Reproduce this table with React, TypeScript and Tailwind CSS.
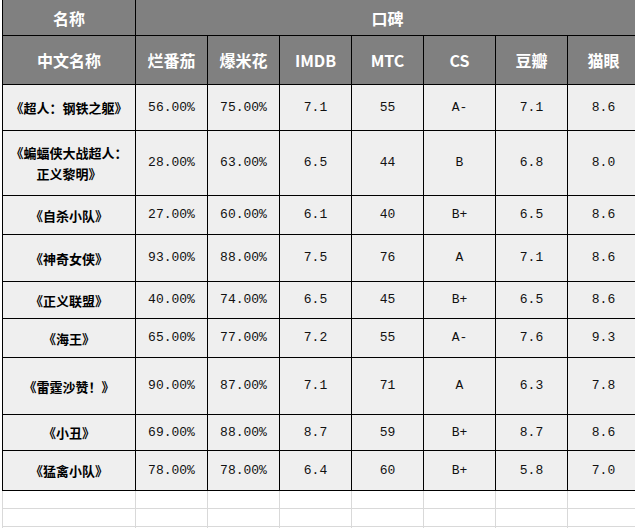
import { Fragment } from "react";

const rows: [string, string, string, string, string, string, string, string][] = [
  ["《超人：钢铁之躯》", "56.00%", "75.00%", "7.1", "55", "A-", "7.1", "8.6"],
  ["《蝙蝠侠大战超人：\n正义黎明》", "28.00%", "63.00%", "6.5", "44", "B", "6.8", "8.0"],
  ["《自杀小队》", "27.00%", "60.00%", "6.1", "40", "B+", "6.5", "8.6"],
  ["《神奇女侠》", "93.00%", "88.00%", "7.5", "76", "A", "7.1", "8.6"],
  ["《正义联盟》", "40.00%", "74.00%", "6.5", "45", "B+", "6.5", "8.6"],
  ["《海王》", "65.00%", "77.00%", "7.2", "55", "A-", "7.6", "9.3"],
  ["《雷霆沙赞！》", "90.00%", "87.00%", "7.1", "71", "A", "6.3", "7.8"],
  ["《小丑》", "69.00%", "88.00%", "8.7", "59", "B+", "8.7", "8.6"],
  ["《猛禽小队》", "78.00%", "78.00%", "6.4", "60", "B+", "5.8", "7.0"],
];

const headers = ["中文名称", "烂番茄", "爆米花", "IMDB", "MTC", "CS", "豆瓣", "猫眼"];

const cjk = "font-['Noto_Sans_CJK_SC',sans-serif]";
const mono = "font-['Liberation_Mono','Noto_Sans_CJK_SC',monospace]";

export default function App() {
  return (
    <div className="h-[528px] w-[635px] overflow-hidden bg-white">
      <div className="-mt-px ml-[2px] grid w-max grid-cols-[132px_repeat(7,71px)] grid-rows-[35px_48px_45px_64px_38px_46px_36px_38px_56px_35px_39px] gap-px bg-black p-px">
        <div className={`flex items-center justify-center bg-[#808080] text-[16px] font-bold text-white ${cjk}`}>
          名称
        </div>
        <div className={`col-span-7 flex items-center justify-center bg-[#808080] text-[16px] font-bold text-white ${cjk}`}>
          口碑
        </div>
        {headers.map((h) => (
          <div
            key={h}
            className={`flex items-center justify-center bg-[#808080] text-[16px] font-bold text-white ${cjk}`}
          >
            {h}
          </div>
        ))}
        {rows.map((row) => (
          <Fragment key={row[0]}>
            <div
              className={`flex items-center justify-center whitespace-pre-line bg-[#efefef] text-center text-[13px] font-bold leading-[21px] text-black ${cjk}`}
            >
              {row[0]}
            </div>
            {row.slice(1).map((v, i) => (
              <div
                key={i}
                className={`flex items-center justify-center bg-[#efefef] text-[13px] text-[#111] ${mono}`}
              >
                {v}
              </div>
            ))}
          </Fragment>
        ))}
      </div>
      <div className="ml-[2px] grid w-max grid-cols-[132px_repeat(7,71px)] grid-rows-[17px_17px_17px] gap-px bg-[#d9d9d9] pl-px">
        {Array.from({ length: 24 }).map((_, i) => (
          <div key={i} className="bg-white" />
        ))}
      </div>
    </div>
  );
}
